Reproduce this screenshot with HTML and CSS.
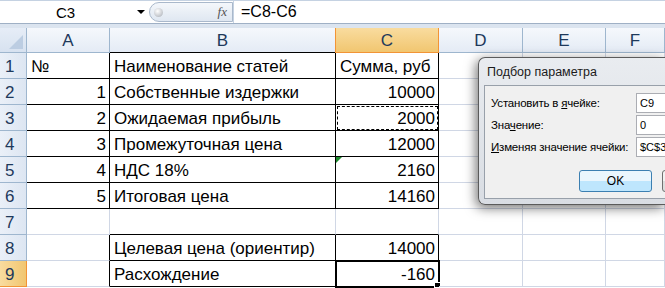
FILE: index.html
```html
<!DOCTYPE html>
<html lang="ru">
  <head>
    <meta charset="UTF-8" />
    <title>Подбор параметра</title>
    <link rel="stylesheet" href="styles.css">
  </head>
  <body>
    <div class="formula-bar">
      <div class="name-box">
        <span class="name-text">C3</span>
        <span class="drop"></span>
      </div>
      <div class="pill">
        <span class="knob"></span>
        <span class="fx">fx</span>
      </div>
      <div class="formula">=C8-C6</div>
    </div>
    <div class="bar-gap"></div>

    <div class="sheet">
      <div class="corner"><span class="tri"></span></div>
      <div class="col-h">A</div>
      <div class="col-h blk-b">B</div>
      <div class="col-h sel">C</div>
      <div class="col-h">D</div>
      <div class="col-h">E</div>
      <div class="col-h">F</div>

      <div class="row-h">1</div>
      <div class="cell blk">№</div>
      <div class="cell blk">Наименование статей</div>
      <div class="cell blk">Сумма, руб</div>
      <div class="cell"></div><div class="cell"></div><div class="cell"></div>

      <div class="row-h">2</div>
      <div class="cell blk num">1</div>
      <div class="cell blk">Собственные издержки</div>
      <div class="cell blk num">10000</div>
      <div class="cell"></div><div class="cell"></div><div class="cell"></div>

      <div class="row-h">3</div>
      <div class="cell blk num">2</div>
      <div class="cell blk">Ожидаемая прибыль</div>
      <div class="cell blk num marquee">2000</div>
      <div class="cell"></div><div class="cell"></div><div class="cell"></div>

      <div class="row-h">4</div>
      <div class="cell blk num">3</div>
      <div class="cell blk">Промежуточная цена</div>
      <div class="cell blk num">12000</div>
      <div class="cell"></div><div class="cell"></div><div class="cell"></div>

      <div class="row-h">5</div>
      <div class="cell blk num">4</div>
      <div class="cell blk">НДС 18%</div>
      <div class="cell blk num"><span class="err"></span>2160</div>
      <div class="cell"></div><div class="cell"></div><div class="cell"></div>

      <div class="row-h">6</div>
      <div class="cell blk num">5</div>
      <div class="cell blk">Итоговая цена</div>
      <div class="cell blk num">14160</div>
      <div class="cell"></div><div class="cell"></div><div class="cell"></div>

      <div class="row-h">7</div>
      <div class="cell"></div>
      <div class="cell blk-b"></div>
      <div class="cell blk-b"></div>
      <div class="cell"></div><div class="cell"></div><div class="cell"></div>

      <div class="row-h">8</div>
      <div class="cell blk-r"></div>
      <div class="cell blk">Целевая цена (ориентир)</div>
      <div class="cell blk num">14000</div>
      <div class="cell"></div><div class="cell"></div><div class="cell"></div>

      <div class="row-h sel-row">9</div>
      <div class="cell blk-r"></div>
      <div class="cell blk">Расхождение</div>
      <div class="cell blk num active">-160<span class="handle"></span></div>
      <div class="cell"></div><div class="cell"></div><div class="cell"></div>
    </div>

    <div class="dialog">
      <div class="dlg-title">Подбор параметра</div>
      <div class="dlg-body">
        <div class="dlg-row">
          <label>Установить в <u>я</u>чейке:</label>
          <div class="field">C9</div>
        </div>
        <div class="dlg-row">
          <label>Зна<u>ч</u>ение:</label>
          <div class="field">0</div>
        </div>
        <div class="dlg-row">
          <label><u>И</u>зменяя значение ячейки:</label>
          <div class="field">$C$3</div>
        </div>
        <div class="dlg-buttons">
          <div class="btn ok">OK</div>
          <div class="btn"></div>
        </div>
      </div>
    </div>
  </body>
</html>
```

FILE: styles.css
```css
:root {
  --grid-line: #d0d7e5;
  --head-line: #9eb6ce;
  --head-text: #1e395b;
  --sel-line: #f29436;
}

body {
  margin: 0;
  width: 665px;
  height: 288px;
  overflow: hidden;
  position: relative;
  background: #ffffff;
  font-family: "Liberation Sans", Arial, sans-serif;
}

/* Formula bar */
.formula-bar {
  display: flex;
  height: 22px;
  border-top: 1px solid #c5d2e2;
  background: #ffffff;
}

.name-box {
  width: 149px;
  display: flex;
  align-items: center;
}

.name-text {
  flex: 1;
  text-align: center;
  font-size: 15px;
  padding-right: 6px;
  color: #000;
}

.drop {
  width: 0;
  height: 0;
  border-left: 4px solid transparent;
  border-right: 4px solid transparent;
  border-top: 4px solid #000;
  margin-right: 4px;
}

.pill {
  width: 84px;
  height: 20px;
  border: 1px solid #a9b8cb;
  border-radius: 11px 0 0 11px;
  background: linear-gradient(#f4f7fb, #dfe7f1);
  display: flex;
  align-items: center;
  justify-content: space-between;
  box-sizing: border-box;
  align-self: center;
}

.knob {
  width: 9px;
  height: 9px;
  border-radius: 50%;
  margin-left: 4px;
  background: radial-gradient(circle at 40% 35%, #ffffff, #a5aab2);
}

.fx {
  font-family: "Liberation Serif", serif;
  font-style: italic;
  font-size: 13px;
  color: #555;
  margin-right: 5px;
}

.formula {
  flex: 1;
  border-left: 1px solid #c5d2e2;
  font-size: 16px;
  line-height: 21px;
  padding-left: 7px;
  color: #000;
}

.bar-gap {
  height: 4px;
  border-top: 1px solid #9fb0c5;
  background: #dbe4ef;
}

/* Sheet grid */
.sheet {
  display: grid;
  grid-template-columns: 27px 83px 226px 103px 84px 83px 59px;
  grid-template-rows: 25px repeat(9, 26px);
  font-size: 17px;
}

.corner {
  background: linear-gradient(#e6edf7, #d7e2f0);
  border-right: 1px solid var(--head-line);
  border-bottom: 1px solid var(--head-line);
  position: relative;
}

.tri {
  position: absolute;
  right: 3px;
  bottom: 3px;
  width: 0;
  height: 0;
  border-left: 14px solid transparent;
  border-bottom: 14px solid #bccde2;
}

.col-h {
  background: linear-gradient(#f5f8fc, #e4ebf5);
  border-right: 1px solid var(--head-line);
  border-bottom: 1px solid var(--head-line);
  text-align: center;
  line-height: 26px;
  color: var(--head-text);
}

.col-h.blk-b {
  border-bottom-color: #000;
}

.col-h.sel {
  background: linear-gradient(#f9dc9f, #f1c670);
  border-left: 1px solid var(--sel-line);
  border-right: 1px solid var(--sel-line);
  border-bottom: 1px solid var(--sel-line);
  margin-left: -1px;
}

.row-h {
  background: linear-gradient(90deg, #eaf0f8, #dde6f2);
  border-right: 1px solid var(--head-line);
  border-bottom: 1px solid var(--head-line);
  line-height: 27px;
  padding-left: 5px;
  color: var(--head-text);
}

.row-h.sel-row {
  background: linear-gradient(90deg, #f9dc9f, #f1c670);
  border-right-color: var(--sel-line);
  border-bottom-color: var(--sel-line);
}

.cell {
  border-right: 1px solid var(--grid-line);
  border-bottom: 1px solid var(--grid-line);
  line-height: 27px;
  padding: 0 3px 0 4px;
  white-space: nowrap;
  color: #000;
  position: relative;
}

.cell.blk {
  border-right-color: #000;
  border-bottom-color: #000;
}

.cell.blk-b {
  border-bottom-color: #000;
}

.cell.blk-r {
  border-right-color: #000;
}

.num {
  text-align: right;
}

.marquee {
  outline: 1px dashed #000;
  outline-offset: -2px;
}

.err {
  position: absolute;
  left: 0;
  top: 0;
  width: 0;
  height: 0;
  border-top: 6px solid #1c8a2c;
  border-right: 6px solid transparent;
}

.active {
  outline: 2px solid #000;
  outline-offset: -1px;
}

.handle {
  position: absolute;
  right: -3px;
  bottom: -2px;
  width: 5px;
  height: 4px;
  background: #000;
  border: 1px solid #fff;
}

/* Goal seek dialog */
.dialog {
  position: absolute;
  left: 478px;
  top: 57px;
  width: 187px;
  height: 148px;
  border: 1px solid #5b5b5b;
  border-right: none;
  border-radius: 7px 0 0 7px;
  background: linear-gradient(#e9ecf0, #d9dde3);
  box-shadow: -2px 3px 12px rgba(0, 0, 0, 0.55);
  font-size: 11.5px;
  letter-spacing: -0.2px;
  color: #000;
  display: flex;
  flex-direction: column;
  box-sizing: border-box;
}

.dlg-title {
  height: 27px;
  line-height: 28px;
  padding-left: 8px;
  font-size: 12.5px;
  letter-spacing: 0;
  color: #1b1b1b;
}

.dlg-body {
  margin-left: 5px;
  height: 114px;
  border: 1px solid #98a0aa;
  border-right: none;
  background: #f0f0f0;
  padding-top: 7px;
  box-sizing: border-box;
  display: flex;
  flex-direction: column;
  gap: 2px;
}

.dlg-row {
  display: flex;
  align-items: center;
  height: 20px;
}

.dlg-row label {
  width: 145px;
  flex-shrink: 0;
  padding-left: 6px;
  white-space: nowrap;
}

.field {
  flex: 1;
  height: 20px;
  box-sizing: border-box;
  border: 1px solid #abadb3;
  border-right: none;
  background: #fff;
  line-height: 18px;
  padding-left: 3px;
  font-size: 11px;
  letter-spacing: 0;
  white-space: nowrap;
  overflow: hidden;
}

.dlg-buttons {
  display: flex;
  gap: 10px;
  margin-top: 11px;
  padding-left: 94px;
  overflow: hidden;
}

.btn {
  flex-shrink: 0;
  width: 73px;
  height: 22px;
  box-sizing: border-box;
  border: 1px solid #707070;
  border-radius: 3px;
  background: linear-gradient(#f2f2f2 50%, #dddddd 50%);
  text-align: center;
  line-height: 20px;
  font-size: 12px;
  letter-spacing: 0;
}

.btn.ok {
  border-color: #3c7fb1;
  background: linear-gradient(#eaf6fd 50%, #bee6fd 50%);
}
```
